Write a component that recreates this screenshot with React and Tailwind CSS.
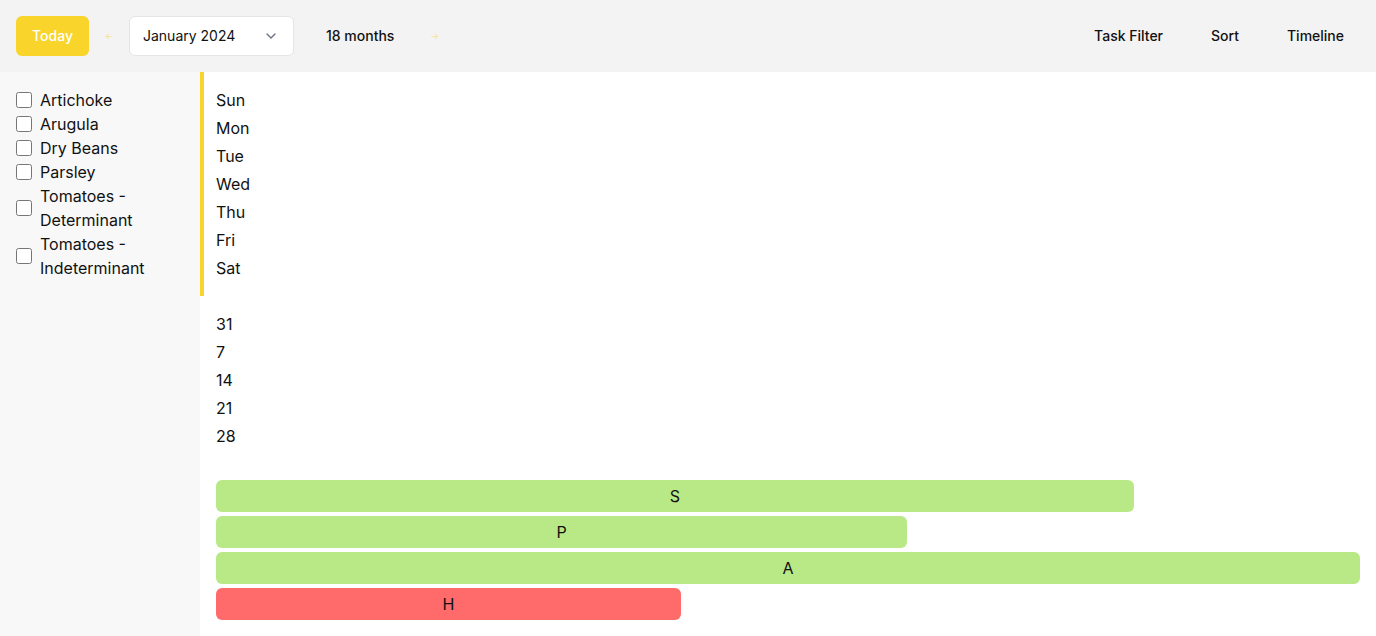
import { ChevronDown } from 'lucide-react';

const crops = [
  'Artichoke',
  'Arugula',
  'Dry Beans',
  'Parsley',
  'Tomatoes - Determinant',
  'Tomatoes - Indeterminant',
];

const days = ['Sun', 'Mon', 'Tue', 'Wed', 'Thu', 'Fri', 'Sat'];
const weeks = ['31', '7', '14', '21', '28'];

const bars = [
  { label: 'S', width: 918, color: 'bg-[#b9e887]' },
  { label: 'P', width: 691, color: 'bg-[#b9e887]' },
  { label: 'A', width: 1144, color: 'bg-[#b9e887]' },
  { label: 'H', width: 465, color: 'bg-[#ff6b6b]' },
];

const App = () => {
  return (
    <div className="min-h-[636px] flex flex-col text-black" style={{ fontFamily: 'Inter, "Liberation Sans", sans-serif' }}>
      <header className="h-[72px] bg-[#f3f3f3] flex items-center justify-between pl-4 pr-2">
        <div className="flex items-center">
          <button className="h-10 w-[73px] rounded-md bg-[#f9d42a] text-white text-sm font-medium">
            Today
          </button>
          <span className="w-10 text-center text-[9px] text-[#f9d42a] opacity-50">←</span>
          <div className="h-10 w-[165px] bg-white border border-[#e5e5e5] rounded-md flex items-center justify-between pl-[13px] pr-[14px]">
            <span className="text-sm text-[#111]">January 2024</span>
            <ChevronDown size={16} className="text-gray-500" />
          </div>
          <button className="px-8 text-sm font-medium text-[#111]">18 months</button>
          <span className="text-[9px] text-[#f9d42a] opacity-50 ml-1">→</span>
        </div>
        <div className="flex items-center text-sm font-medium text-[#111]">
          <button className="px-6">Task Filter</button>
          <button className="px-6">Sort</button>
          <button className="px-6">Timeline</button>
        </div>
      </header>

      <div className="flex flex-1">
        <aside className="w-[200px] shrink-0 bg-[#f8f8f8] px-4 pt-4">
          {crops.map((crop) => (
            <label key={crop} className="flex items-center gap-2 text-base leading-6 text-[#111]">
              <input type="checkbox" className="w-4 h-4 shrink-0 m-0" />
              <span>{crop}</span>
            </label>
          ))}
        </aside>

        <main className="flex-1 bg-white">
          <div className="border-l-4 border-[#f9d42a] pl-3 py-4 flex flex-col gap-1">
            {days.map((d) => (
              <div key={d} className="leading-6 text-base text-[#111]">{d}</div>
            ))}
          </div>
          <div className="px-4 pt-4 flex flex-col gap-1">
            {weeks.map((w) => (
              <div key={w} className="leading-6 text-base text-[#111]">{w}</div>
            ))}
          </div>
          <div className="px-4 pt-8 pb-4 flex flex-col gap-1">
            {bars.map((b) => (
              <div
                key={b.label}
                className={`${b.color} h-8 rounded-md flex items-center justify-center text-base text-[#111]`}
                style={{ width: b.width }}
              >
                {b.label}
              </div>
            ))}
          </div>
        </main>
      </div>
    </div>
  );
};

export default App;
